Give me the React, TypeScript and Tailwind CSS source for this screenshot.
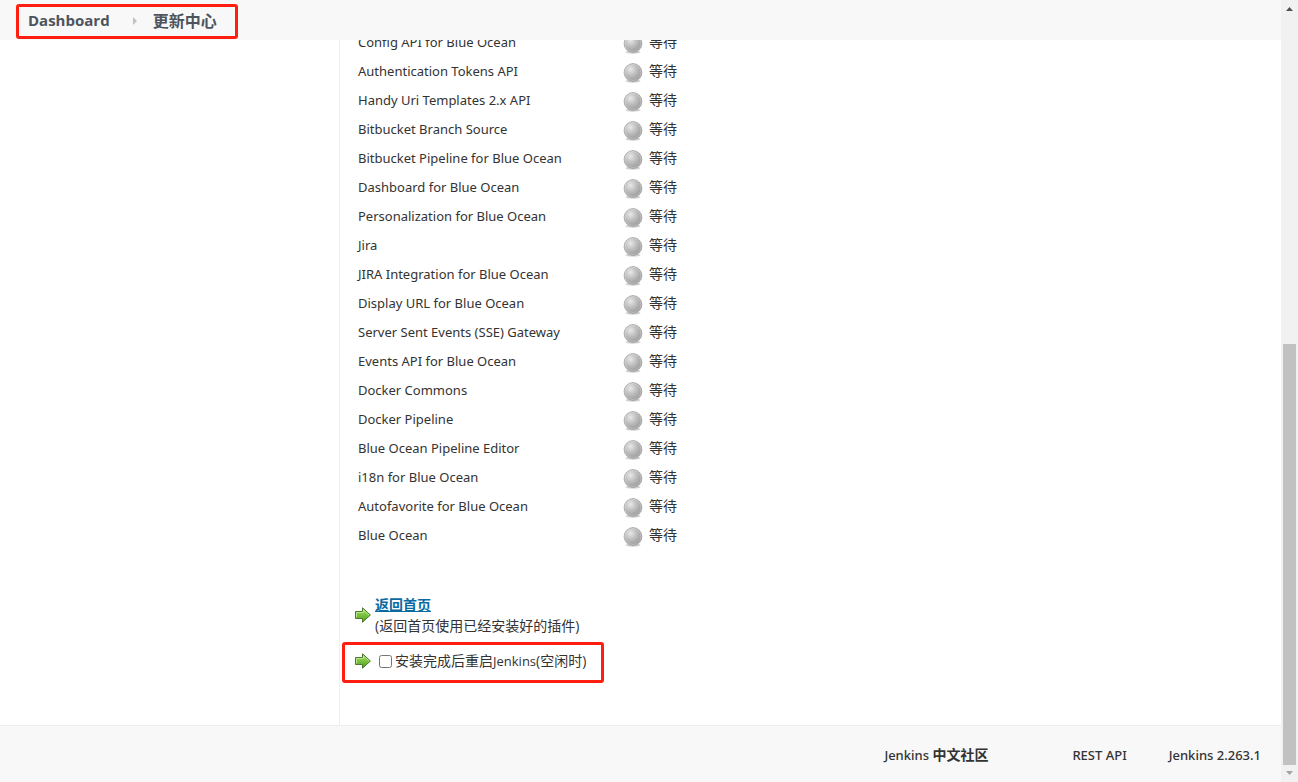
const plugins = [
  'Config API for Blue Ocean',
  'Authentication Tokens API',
  'Handy Uri Templates 2.x API',
  'Bitbucket Branch Source',
  'Bitbucket Pipeline for Blue Ocean',
  'Dashboard for Blue Ocean',
  'Personalization for Blue Ocean',
  'Jira',
  'JIRA Integration for Blue Ocean',
  'Display URL for Blue Ocean',
  'Server Sent Events (SSE) Gateway',
  'Events API for Blue Ocean',
  'Docker Commons',
  'Docker Pipeline',
  'Blue Ocean Pipeline Editor',
  'i18n for Blue Ocean',
  'Autofavorite for Blue Ocean',
  'Blue Ocean'
];

function PendingBall() {
  return (
    <svg width="20" height="21" viewBox="0 0 20 21" className="mt-1 shrink-0" aria-hidden="true">
      <ellipse cx="10" cy="19.2" rx="7.5" ry="1.6" fill="#000" opacity="0.18" />
      <circle cx="10" cy="10.5" r="8.9" fill="url(#ball-body)" stroke="#989898" strokeWidth="0.7" />
      <circle cx="10" cy="10.5" r="8" fill="none" stroke="#fff" strokeWidth="0.8" opacity="0.35" />
    </svg>
  );
}

function GreenArrow() {
  return (
    <svg width="17" height="16" viewBox="0 0 17 16" className="shrink-0" aria-hidden="true">
      <path
        d="M1.5 4.5H8.5V0.8L16.4 8L8.5 15.2V11.5H1.5Z"
        fill="url(#arrow-body)"
        stroke="#4a7a2c"
        strokeLinejoin="round"
      />
      <path d="M2.5 10.5V5.5H9.5V3L15 8" fill="none" stroke="#c5eda0" strokeWidth="0.8" />
    </svg>
  );
}

function Gradients() {
  return (
    <svg width="0" height="0" className="absolute" aria-hidden="true">
      <defs>
        <radialGradient id="ball-body" cx="0.36" cy="0.32" r="0.68">
          <stop offset="0" stopColor="#e8e8e8" />
          <stop offset="0.5" stopColor="#bebebe" />
          <stop offset="1" stopColor="#9c9c9c" />
        </radialGradient>
        <linearGradient id="arrow-body" x1="0" y1="0" x2="0" y2="1">
          <stop offset="0" stopColor="#a6dc6c" />
          <stop offset="0.5" stopColor="#7cc23e" />
          <stop offset="1" stopColor="#4c9e1d" />
        </linearGradient>
      </defs>
    </svg>
  );
}

function Header() {
  return (
    <header className="relative z-10 h-10 shrink-0 bg-[#f8f8f8] px-4 pt-1">
      <nav className="flex h-[35px] w-[222px] items-center rounded-[3px] border-3 border-[#ff1e0f] px-[9px] pb-[2px] font-bold text-[#4d545d]">
        <a href="#dashboard" className="text-[15px]">
          Dashboard
        </a>
        <svg width="6" height="8" viewBox="0 0 6 8" className="mr-[14px] ml-[23px]" aria-hidden="true">
          <path d="M0 0L4 4L0 8Z" fill="#bfc1c4" />
        </svg>
        <a href="#update-center" className="text-base">
          更新中心
        </a>
      </nav>
    </header>
  );
}

function PluginTable() {
  return (
    <table className="-mt-[13px] ml-[18px] border-collapse">
      <tbody>
        {plugins.map((name) => (
          <tr key={name} className="h-[29px]">
            <td className="w-[265px] p-0 font-['Noto_Sans',sans-serif] text-[13px] leading-5">{name}</td>
            <td className="p-0">
              <div className="flex h-[29px] items-center gap-[6px]">
                <PendingBall />
                <span>等待</span>
              </div>
            </td>
          </tr>
        ))}
      </tbody>
    </table>
  );
}

function Footer() {
  return (
    <footer className="flex h-[57px] shrink-0 items-center justify-end border-t border-[#eaeff2] bg-[#f8f8f8] pt-[2px] pr-5 font-['Noto_Sans','Noto_Sans_CJK_SC',sans-serif] text-[13px] font-medium">
      <a href="#community" className="mr-[84px]">
        Jenkins <span className="text-sm font-bold">中文社区</span>
      </a>
      <a href="#api" className="mr-[42px]">
        REST API
      </a>
      <a href="#version">Jenkins 2.263.1</a>
    </footer>
  );
}

function Scrollbar() {
  return (
    <div className="flex w-[17px] shrink-0 flex-col items-center bg-[#f1f1f1]" aria-hidden="true">
      <svg width="17" height="17" viewBox="0 0 17 17">
        <path d="M5 11L8.5 7L12 11Z" fill="#505050" />
      </svg>
      <div className="flex min-h-0 w-full grow flex-col px-[2px]">
        <div className="grow-[327]" />
        <div className="grow-[421] bg-[#c1c1c1]" />
      </div>
      <svg width="17" height="17" viewBox="0 0 17 17">
        <path d="M5 6L8.5 10L12 6Z" fill="#a3a3a3" />
      </svg>
    </div>
  );
}

export default function App() {
  return (
    <div className="flex h-screen overflow-hidden bg-white font-['Open_Sans','Noto_Sans_CJK_SC',sans-serif] text-sm text-[#333]">
      <Gradients />
      <div className="flex min-w-0 grow flex-col">
        <Header />
        <div className="flex min-h-0 grow">
          <aside className="w-[340px] shrink-0 border-r border-[#eaeff2]" />
          <main className="min-w-0 grow">
            <PluginTable />
            <div className="mt-[45px] ml-[14px] flex items-center gap-1">
              <GreenArrow />
              <div className="leading-[21px]">
                <a href="#home" className="font-bold text-[#0b6aa2] underline">
                  返回首页
                </a>
                <div>(返回首页使用已经安装好的插件)</div>
              </div>
            </div>
            <div className="mt-[6px] ml-[2px] flex h-[41px] w-[262px] items-center rounded-[3px] border-3 border-[#ff1e0f] pb-[3px] pl-[9px]">
              <GreenArrow />
              <input id="restart" type="checkbox" className="mr-[3px] ml-2 size-[13px]" />
              <label htmlFor="restart">
                安装完成后重启<span className="text-[13px]">Jenkins</span>(空闲时)
              </label>
            </div>
          </main>
        </div>
        <Footer />
      </div>
      <Scrollbar />
    </div>
  );
}
